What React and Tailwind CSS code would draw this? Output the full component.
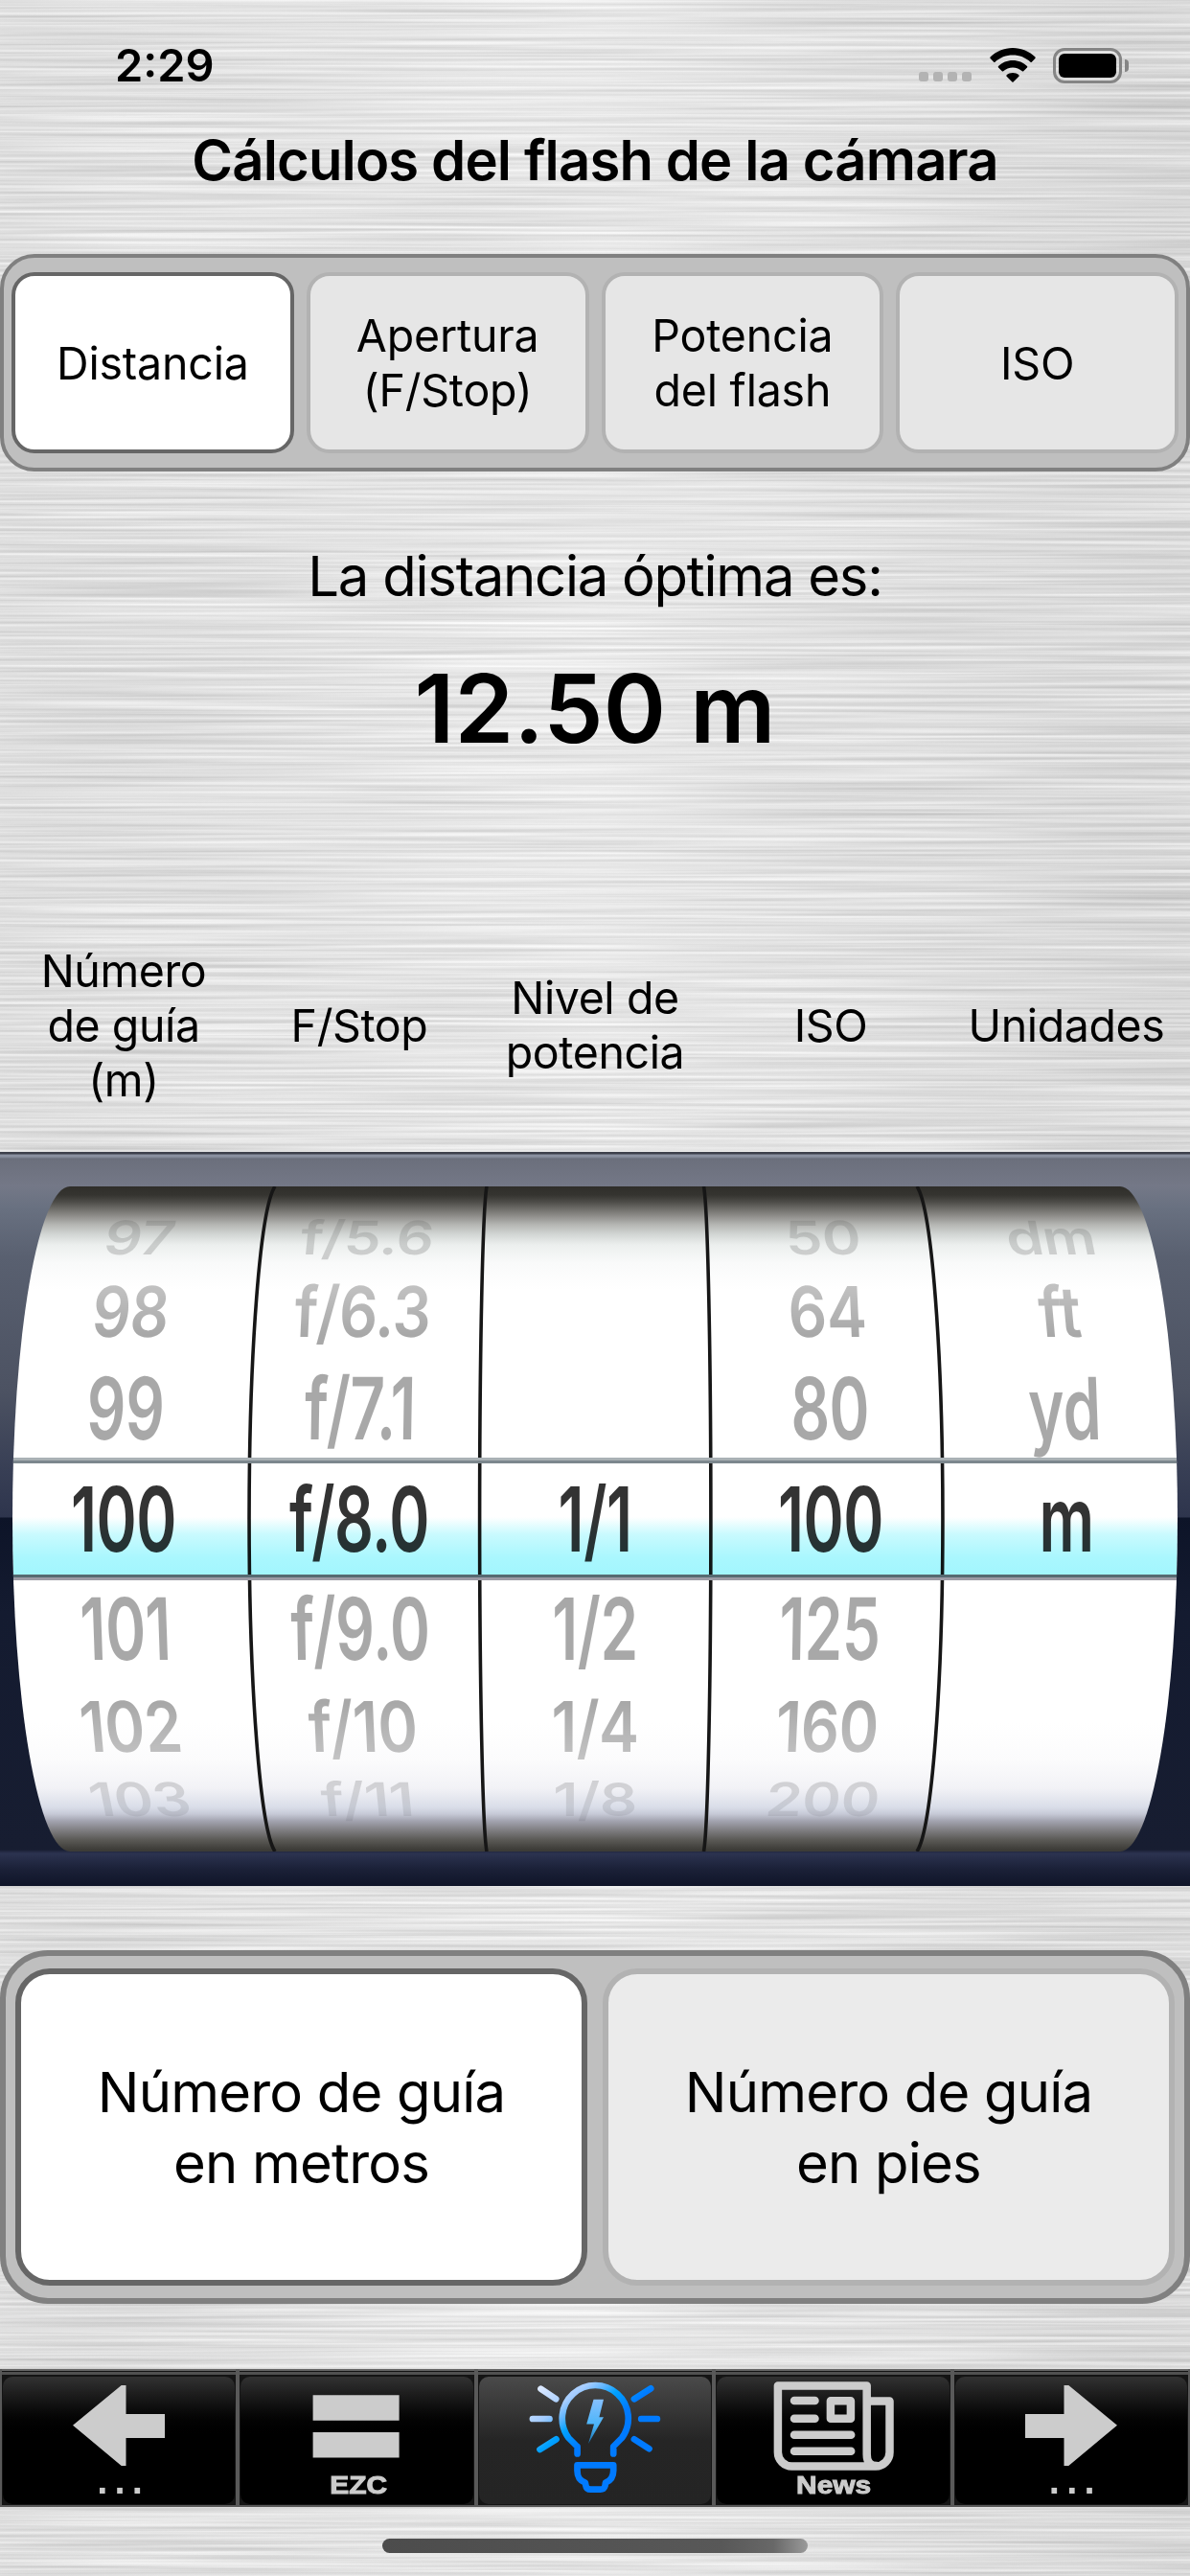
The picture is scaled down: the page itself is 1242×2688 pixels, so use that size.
const modes = [
    ["Distancia"],
    ["Apertura", "(F/Stop)"],
    ["Potencia", "del flash"],
    ["ISO"],
];

const columns = [
    ["Número", "de guía", "(m)"],
    ["F/Stop"],
    ["Nivel de", "potencia"],
    ["ISO"],
    ["Unidades"],
];

// stretch / narrow / lean describe how a row is bent round the drum
const rows = [
    {
        values: ["97", "f/5.6", "", "50", "dm"],
        className: "h-[56px]",
        stretch: 0.76,
        narrow: 0.966,
        lean: -0.9,
    },
    {
        values: ["98", "f/6.3", "", "64", "ft"],
        className: "h-[97px]",
        stretch: 1.14,
        narrow: 0.985,
        lean: -0.4,
    },
    {
        values: ["99", "f/7.1", "", "80", "yd"],
        className: "h-[106px]",
        stretch: 1.4,
        narrow: 0.996,
        lean: -0.15,
    },
    {
        values: ["100", "f/8.0", "1/1", "100", "m"],
        className: "h-[124px]",
        stretch: 1.46,
        narrow: 1,
        lean: 0,
        selected: true,
    },
    {
        values: ["101", "f/9.0", "1/2", "125", ""],
        className: "h-[106px]",
        stretch: 1.4,
        narrow: 0.996,
        lean: 0.15,
    },
    {
        values: ["102", "f/10", "1/4", "160", ""],
        className: "h-[97px]",
        stretch: 1.14,
        narrow: 0.985,
        lean: 0.4,
    },
    {
        values: ["103", "f/11", "1/8", "200", ""],
        className: "h-[56px]",
        stretch: 0.76,
        narrow: 0.966,
        lean: 0.9,
    },
];

const leanByColumn = [13, 6.5, 0, -6.5, -13];

function BrushedMetal() {
    return (
        <>
            <svg className="absolute inset-0 h-full w-full" aria-hidden="true">
                <defs>
                    <filter
                        id="brushed"
                        x="0"
                        y="0"
                        width="100%"
                        height="100%"
                        colorInterpolationFilters="sRGB"
                    >
                        <feTurbulence
                            type="fractalNoise"
                            baseFrequency="0.0028 0.31"
                            numOctaves="2"
                            seed="8"
                        />
                        <feColorMatrix
                            values="0.24 0.08 0 0 0.73
                                    0.24 0.08 0 0 0.73
                                    0.24 0.08 0 0 0.73
                                    0 0 0 0 1"
                        />
                    </filter>
                </defs>
                <rect width="100%" height="100%" filter="url(#brushed)" />
            </svg>
            <div className="absolute inset-0 bg-linear-to-r from-black/2 via-white/15 to-black/4" />
        </>
    );
}

function StatusBar() {
    return (
        <div className="flex h-[136px] items-center justify-between pr-[64px] pl-[120px]">
            <span className="text-[47px] font-semibold">2:29</span>
            <div className="flex items-center">
                <div className="mt-6 mr-[19px] flex gap-[5px]">
                    {[0, 1, 2, 3].map((dot) => (
                        <span
                            key={dot}
                            className="h-[10px] w-[10px] rounded-[3px] bg-[#b3b3b3]"
                        />
                    ))}
                </div>
                <svg
                    className="mr-[18px] h-[36px] w-[48px]"
                    viewBox="0 0 48 36"
                >
                    <path d="M24 0C33 0 41.500 3.600 47.500 9.600Q48 10.300 47.400 11L43.800 14.700Q43.200 15.200 42.500 14.700C37.500 9.900 31 7.400 24 7.400S10.500 9.900 5.500 14.700Q4.800 15.200 4.200 14.700L.6 11Q0 10.300 .5 9.600C6.500 3.600 15 0 24 0Z" />
                    <path d="M24 13C29.800 13 35.100 15.300 39 19Q39.600 19.700 39 20.400L35.200 24.200Q34.500 24.700 33.800 24.200C31.100 21.700 27.700 20.400 24 20.400S16.900 21.700 14.200 24.200Q13.500 24.700 12.800 24.200L9 20.400Q8.400 19.700 9 19C12.900 15.300 18.200 13 24 13Z" />
                    <path d="M24 26C26.500 26 28.700 26.900 30.400 28.300Q31 29 30.400 29.700L24.600 35.600Q24 36 23.400 35.600L17.600 29.700Q17 29 17.600 28.300C19.300 26.900 21.500 26 24 26Z" />
                </svg>
                <div className="h-[37px] w-[72px] rounded-[12px] border-[3px] border-[#858585] p-[3px]">
                    <div className="h-full rounded-[6px] bg-black" />
                </div>
                <div className="ml-[3px] h-[13px] w-1 rounded-r-full bg-[#858585]" />
            </div>
        </div>
    );
}

function Drum() {
    return (
        <div className="relative h-[694px] w-[1216px] overflow-hidden rounded-[60px/347px] bg-[linear-gradient(#2f2e2a_0px,#353430_9px,#4c4b47_16px,#6c6b67_23px,#8f8e8b_31px,#b5b6b3_40px,#d2d6d4_50px,#ecefee_61px,#f9fafa_80px,#fff_108px,#fff_560px,#fbfbfc_600px,#f2f2f6_628px,#d9dde8_648px,#c6c9d6_655px,#a3a4b0_662px,#7e7d80_672px,#5a5955_682px,#3d3c38_692px)]">
            <div className="-ml-[7px] w-[1230px] pt-[26px] [mask-image:linear-gradient(rgba(0,0,0,.15)_10px,rgba(0,0,0,.3)_40px,rgba(0,0,0,.47)_72px,rgba(0,0,0,.7)_103px,#000_155px,#000_539px,rgba(0,0,0,.7)_591px,rgba(0,0,0,.42)_622px,rgba(0,0,0,.2)_658px)]">
                {rows.map((row) => (
                    <div
                        key={row.values[0]}
                        className={`grid grid-cols-5 items-center text-center text-[64px] leading-[40px] font-semibold tracking-[-0.500px] ${row.className} ${
                            row.selected ? "text-black/80" : "text-black/34"
                        }`}
                        style={{ transform: `scaleX(${row.narrow})` }}
                    >
                        {row.values.map((value, i) => (
                            <span
                                key={i}
                                style={{
                                    transform: `skewX(${row.lean * leanByColumn[i]}deg) scaleY(${row.stretch})`,
                                }}
                            >
                                {value}
                            </span>
                        ))}
                    </div>
                ))}
            </div>
            <svg
                className="absolute inset-0 h-full w-full"
                viewBox="13 0 1216 694"
                fill="none"
                stroke="#161616"
                strokeWidth="3.600"
            >
                <path d="M287 0A31 350 0 0 0 287 694" />
                <path d="M508 0A8.500 350 0 0 0 508 694" />
                <path d="M734.500 0A8.500 350 0 0 1 734.500 694" />
                <path d="M957 0A31 350 0 0 1 957 694" />
            </svg>
            {/* selection band */}
            <div className="absolute inset-x-0 top-[283px] h-[128px] border-t-[3px] border-b-[3px] border-t-[#a9b1b5] border-b-[#9b9ba5]">
                <div className="h-full border-t-[3px] border-b-[3px] border-t-[#7c878d] border-b-[#566a72]" />
            </div>
            <div className="absolute inset-x-0 top-[345px] h-[60px] bg-[linear-gradient(#fff,#c9fafe_30%,#aaf7fe_70%,#a2f6fe)] mix-blend-multiply" />
        </div>
    );
}

function Picker() {
    return (
        <div className="mt-[42px] flex h-[766px] flex-col items-center bg-[linear-gradient(#3d404b_2px,#8a90a0_3px,#8a90a0_5px,#6b6f7c_7px,#747887_36px,#687080_60px,#596070_110px,#4c5262_250px,#383f55_330px,#2e354d_381px,#0d1428_382px,#141b30_480px,#171d31_728px,#2c3350_732px,#1b2138_748px,#11162a_764px)] pt-[36px]">
            <Drum />
        </div>
    );
}

function Tab({ label, selected, children }) {
    return (
        <div className="flex flex-1 flex-col border-x-2 border-b-2 border-[#595959] bg-[#141414]">
            <div className="h-[2px] bg-[#666]" />
            <div className="mt-px h-[3px] bg-[#505050]" />
            <div
                className={`mx-px mt-[2px] flex h-[133px] flex-col items-center rounded-[10px] bg-linear-to-b ${
                    selected
                        ? "from-[#4a4a4a] via-[#252525] to-[#242424]"
                        : "from-[#323232] via-black to-black"
                }`}
            >
                <svg
                    className="h-[100px] w-full overflow-visible"
                    viewBox="3 0 242.400 100"
                    fill="#ccc"
                >
                    {children}
                </svg>
                {label === "..." && (
                    <span className="pl-[9px] font-['Liberation_Sans',Arial,sans-serif] text-[40px] leading-[16px] font-bold tracking-[7.200px] text-[#ccc]">
                        ...
                    </span>
                )}
                {label && label !== "..." && (
                    <span className="scale-x-115 pl-[2px] font-['Liberation_Sans',Arial,sans-serif] text-[26px] leading-[26px] font-bold text-[#ccc] [-webkit-text-stroke:1px_#ccc]">
                        {label}
                    </span>
                )}
            </div>
        </div>
    );
}

function TabBar() {
    return (
        <nav className="mt-[68px] flex h-[144px]">
            <Tab label="...">
                <path d="M76 50.700L126.700 9H131.500V39H172V64H131.500V93H126.700Z" />
            </Tab>
            <Tab label="EZC">
                <path d="M78.600 19.300H168.600V45.700H78.600ZM78.600 58H168.600V84.500H78.600Z" />
            </Tab>
            <Tab selected>
                <defs>
                    <linearGradient
                        id="glow"
                        gradientUnits="userSpaceOnUse"
                        x1="60"
                        y1="5"
                        x2="110"
                        y2="70"
                    >
                        <stop offset="0" stopColor="#eef2ff" />
                        <stop offset=".45" stopColor="#a4ccff" />
                        <stop offset=".6" stopColor="#5cb4ff" />
                        <stop offset=".74" stopColor="#00a2ff" />
                        <stop offset="1" stopColor="#007aff" />
                    </linearGradient>
                    <linearGradient id="bolt" x1="0" y1="0" x2="0" y2="1">
                        <stop offset="0" stopColor="#86c0ff" />
                        <stop offset=".6" stopColor="#48b4f8" />
                        <stop offset="1" stopColor="#1a6fa8" />
                    </linearGradient>
                </defs>
                <g
                    fill="none"
                    stroke="url(#glow)"
                    strokeWidth="6.700"
                    strokeLinecap="round"
                    strokeLinejoin="round"
                >
                    <path d="M105.600 80.500V73Q103.500 71 96.500 64A34.500 34.500 0 1 1 152 64Q145 71 143.200 73V80.500" />
                    <path d="M105.500 92.300H143.200V98C143.200 105 140.500 108.500 135 110.700L134.500 114Q133.500 117.700 129.500 117.700H119.500Q115 117.700 114.500 114L113.800 110.700C108 108.500 105.500 105 105.500 98Z" />
                    <path d="M67.500 12.700L83.200 23.300M66.500 76L83.500 65.300M164.900 23.300L182.200 12.300M164.900 65.300L180.500 75.300" />
                    <path d="M58.900 44H76.500M172.200 44H188.900" />
                </g>
                <path
                    fill="url(#bolt)"
                    d="M122.500 23.700H133L128.400 42.300H133L117 70L123 49.500H115.200Z"
                />
            </Tab>
            <Tab label="News">
                <g
                    fill="none"
                    stroke="#ccc"
                    strokeWidth="8.500"
                    strokeLinecap="round"
                    strokeLinejoin="round"
                >
                    <path d="M159.700 25.500V9.600H66.900V79A14.500 14.500 0 0 0 81.400 93.500H169A14.500 14.500 0 0 0 183.500 79V25.500H159.700V81Q159.700 93 170 93" />
                    <path d="M84 25H105.500M84 43.700H105.500M84 60.700H143.200M84 77.700H143.200" />
                    <rect x="121.900" y="25.200" width="21" height="18.500" />
                </g>
            </Tab>
            <Tab label="...">
                <path d="M172 50.700L121.300 9H116.500V39H76V64H116.500V93H121.300Z" />
            </Tab>
        </nav>
    );
}

export default function App() {
    return (
        <div className="relative h-[2688px] w-[1242px] overflow-hidden bg-[#dedede] font-['Inter',sans-serif] text-black">
            <BrushedMetal />
            <div className="relative flex flex-col">
                <StatusBar />
                <h1 className="h-[62px] text-center text-[58px] leading-[62px] font-semibold tracking-[-0.860px]">
                    Cálculos del flash de la cámara
                </h1>

                <div className="mt-[67px] grid h-[227px] grid-cols-4 gap-[13px] rounded-[36px] border-4 border-[#808080] bg-[#bfbfbf] px-2 py-[15px]">
                    {modes.map((lines, i) => (
                        <button
                            key={lines[0]}
                            className={`flex flex-col items-center justify-center rounded-[24px] border-4 pt-px text-[46.500px] leading-[57px] tracking-[-0.200px] ${
                                i === 0
                                    ? "border-[#666] bg-white"
                                    : "border-[#b2b2b2] bg-[#e6e6e6]"
                            }`}
                        >
                            {lines.map((line) => (
                                <span key={line}>{line}</span>
                            ))}
                        </button>
                    ))}
                </div>

                <p className="mt-[74px] text-center text-[58px] leading-[70px] tracking-[-1.250px]">
                    La distancia óptima es:
                </p>
                <p className="mt-[43px] text-center text-[99px] leading-[120px] font-semibold tracking-[0.200px]">
                    12.50 m
                </p>

                <div className="mt-[181px] grid h-[180px] grid-cols-5 px-[6px] text-[46.500px] leading-[57px] tracking-[-0.400px]">
                    {columns.map((lines) => (
                        <div
                            key={lines[0]}
                            className="flex flex-col items-center justify-center whitespace-nowrap"
                        >
                            {lines.map((line) => (
                                <span key={line}>{line}</span>
                            ))}
                        </div>
                    ))}
                </div>

                <Picker />

                <div className="mt-[67px] grid h-[369px] grid-cols-2 gap-[16px] rounded-[50px] border-[6px] border-[#808080] bg-[#bfbfbf] px-[10px] py-[13px] text-[58px] leading-[74px] tracking-[-0.800px]">
                    <button className="flex flex-col items-center justify-center rounded-[36px] border-[6px] border-[#666] bg-white">
                        <span>Número de guía</span>
                        <span>en metros</span>
                    </button>
                    <button className="flex flex-col items-center justify-center rounded-[36px] border-[6px] border-[#b2b2b2] bg-[#ebebeb]">
                        <span>Número de guía</span>
                        <span>en pies</span>
                    </button>
                </div>

                <TabBar />
                <div className="mx-auto mt-[33px] h-[15px] w-[444px] rounded-full bg-[linear-gradient(90deg,#4c4c4c,#585858_80%,#686868_92%,#9a9a9a)]" />
            </div>
        </div>
    );
}
